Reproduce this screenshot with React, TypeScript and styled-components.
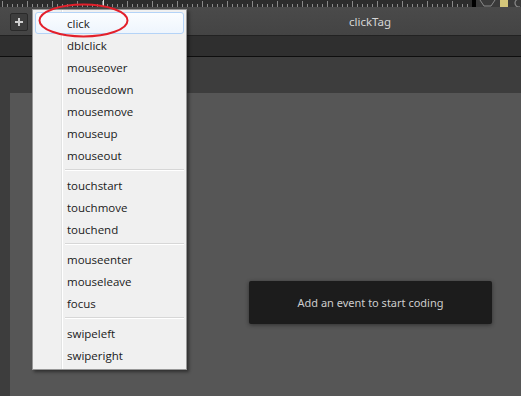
import React from "react";
import styled, { createGlobalStyle } from "styled-components";

const Global = createGlobalStyle`
  html, body { margin: 0; padding: 0; width: 100%; height: 100%; overflow: hidden; background: #3d3d3d; }
  #root { width: 521px; height: 396px; }
`;

const Root = styled.div`
  position: relative;
  width: 521px;
  height: 396px;
  display: flex;
  flex-direction: column;
  overflow: hidden;
  background: #3d3d3d;
  font-family: "Open Sans", "Noto Sans", sans-serif;
`;

const RulerRow = styled.div`
  height: 7px;
  display: flex;
  flex-shrink: 0;
  background: #2c2c2c;
`;

const RulerTrack = styled.div`
  flex: 1;
  height: 7px;
  svg { display: block; }
`;

const RulerCap = styled.div`
  width: 4px;
  background: #000;
`;

const RulerTools = styled.div`
  width: 45px;
  display: flex;
  align-items: center;
  gap: 4px;
  padding-left: 3px;
  background: #3a3a3a;
  svg { display: block; }
`;

const Swatch = styled.div`
  width: 8px;
  height: 7px;
  background: #d3c57a;
`;

const Toolbar = styled.div`
  height: 28px;
  flex-shrink: 0;
  display: flex;
  align-items: center;
  padding-left: 10px;
  background: linear-gradient(#4a4a4a, #444444);
  border-bottom: 1px solid #222;
`;

const AddButton = styled.div`
  width: 18px;
  height: 18px;
  box-sizing: border-box;
  border: 1px solid #2a2a2a;
  border-radius: 2px;
  background: #3d3d3d;
  display: flex;
  align-items: center;
  justify-content: center;
  margin-top: 2px;
  svg { display: block; }
`;

const Title = styled.div`
  margin-left: 321px;
  color: #d6d6d6;
  font-size: 11.5px;
  font-family: "Noto Sans", sans-serif;
`;

const SubBar = styled.div`
  height: 20px;
  flex-shrink: 0;
  background: #2f2f2f;
  border-bottom: 1px solid #0e0e0e;
`;

const Workspace = styled.div`
  flex: 1;
  display: flex;
  padding: 36px 0 0 10px;
  background: #3d3d3d;
`;

const Canvas = styled.div`
  flex: 1;
  background: #565656;
  padding: 188px 0 0 239px;
`;

const Hint = styled.div`
  width: 243px;
  height: 43px;
  background: #1c1c1c;
  border-radius: 2px;
  box-shadow: 0 1px 4px rgba(0, 0, 0, 0.45);
  display: flex;
  align-items: center;
  justify-content: center;
  color: #cdcdcd;
  font-size: 11px;
  font-family: "Noto Sans", sans-serif;
`;

const Menu = styled.div`
  position: absolute;
  left: 32px;
  top: 9px;
  width: 155px;
  box-sizing: border-box;
  padding: 2px 2px 3px 2px;
  background: #f0f0f0;
  border: 1px solid #979797;
  box-shadow: 2px 2px 3px rgba(0, 0, 0, 0.45);
  font-family: "Open Sans", "Noto Sans", sans-serif;
  font-size: 11.5px;
  color: #1a1a1a;
  background-image: linear-gradient(to right, transparent 28px, #e2e3e3 28px, #e2e3e3 29px, #ffffff 29px, #ffffff 30px, transparent 30px);
`;

const Item = styled.div<{ $active?: boolean }>`
  height: 22px;
  box-sizing: border-box;
  display: flex;
  align-items: center;
  padding-left: 31px;
  border: 1px solid ${(p) => (p.$active ? "#b4d3f7" : "transparent")};
  border-radius: 3px;
  background: ${(p) => (p.$active ? "linear-gradient(#fbfdff, #eef5fd)" : "transparent")};
`;

const Separator = styled.div`
  height: 8px;
  display: flex;
  align-items: center;
  padding-left: 30px;
  &::after {
    content: "";
    flex: 1;
    height: 1px;
    background: #d7d7d7;
    border-bottom: 1px solid #ffffff;
  }
`;

const Circle = styled.svg`
  position: absolute;
  left: 38px;
  top: 3px;
  overflow: visible;
`;

const groups = [
  ["click", "dblclick", "mouseover", "mousedown", "mousemove", "mouseup", "mouseout"],
  ["touchstart", "touchmove", "touchend"],
  ["mouseenter", "mouseleave", "focus"],
  ["swipeleft", "swiperight"],
];

function Ruler() {
  const ticks = [];
  for (let x = 2; x < 470; x += 5) {
    const major = (x - 2) % 25 === 0;
    ticks.push(
      <line key={x} x1={x + 0.5} x2={x + 0.5} y1={major ? 1 : 4} y2={7} stroke="#8a8a8a" strokeWidth={1} />
    );
  }
  return (
    <svg width="472" height="7">
      {ticks}
      <line x1={103.5} x2={103.5} y1={0} y2={7} stroke="#e0e0e0" />
    </svg>
  );
}

export default function App() {
  return (
    <Root>
      <Global />
      <RulerRow>
        <RulerTrack>
          <Ruler />
        </RulerTrack>
        <RulerCap />
        <RulerTools>
          <svg width="17" height="7">
            <path d="M1 0 L5 6 L12 6 L16 0" fill="none" stroke="#8a8a8a" strokeWidth="1" />
          </svg>
          <Swatch />
          <svg width="8" height="7">
            <circle cx="7" cy="3" r="4" fill="none" stroke="#8a8a8a" strokeWidth="1.2" />
          </svg>
        </RulerTools>
      </RulerRow>
      <Toolbar>
        <AddButton>
          <svg width="10" height="10" viewBox="0 0 10 10">
            <path d="M5 1 V9 M1 5 H9" stroke="#cfcfcf" strokeWidth="2" />
          </svg>
        </AddButton>
        <Title>clickTag</Title>
      </Toolbar>
      <SubBar />
      <Workspace>
        <Canvas>
          <Hint>Add an event to start coding</Hint>
        </Canvas>
      </Workspace>
      <Menu>
        {groups.map((g, gi) => (
          <React.Fragment key={gi}>
            {gi > 0 && <Separator />}
            {g.map((name) => (
              <Item key={name} $active={name === "click"}>
                {name}
              </Item>
            ))}
          </React.Fragment>
        ))}
      </Menu>
      <Circle width="90" height="34">
        <ellipse cx="45.5" cy="17.5" rx="44" ry="16" fill="none" stroke="#e3202b" strokeWidth="2" />
      </Circle>
    </Root>
  );
}
